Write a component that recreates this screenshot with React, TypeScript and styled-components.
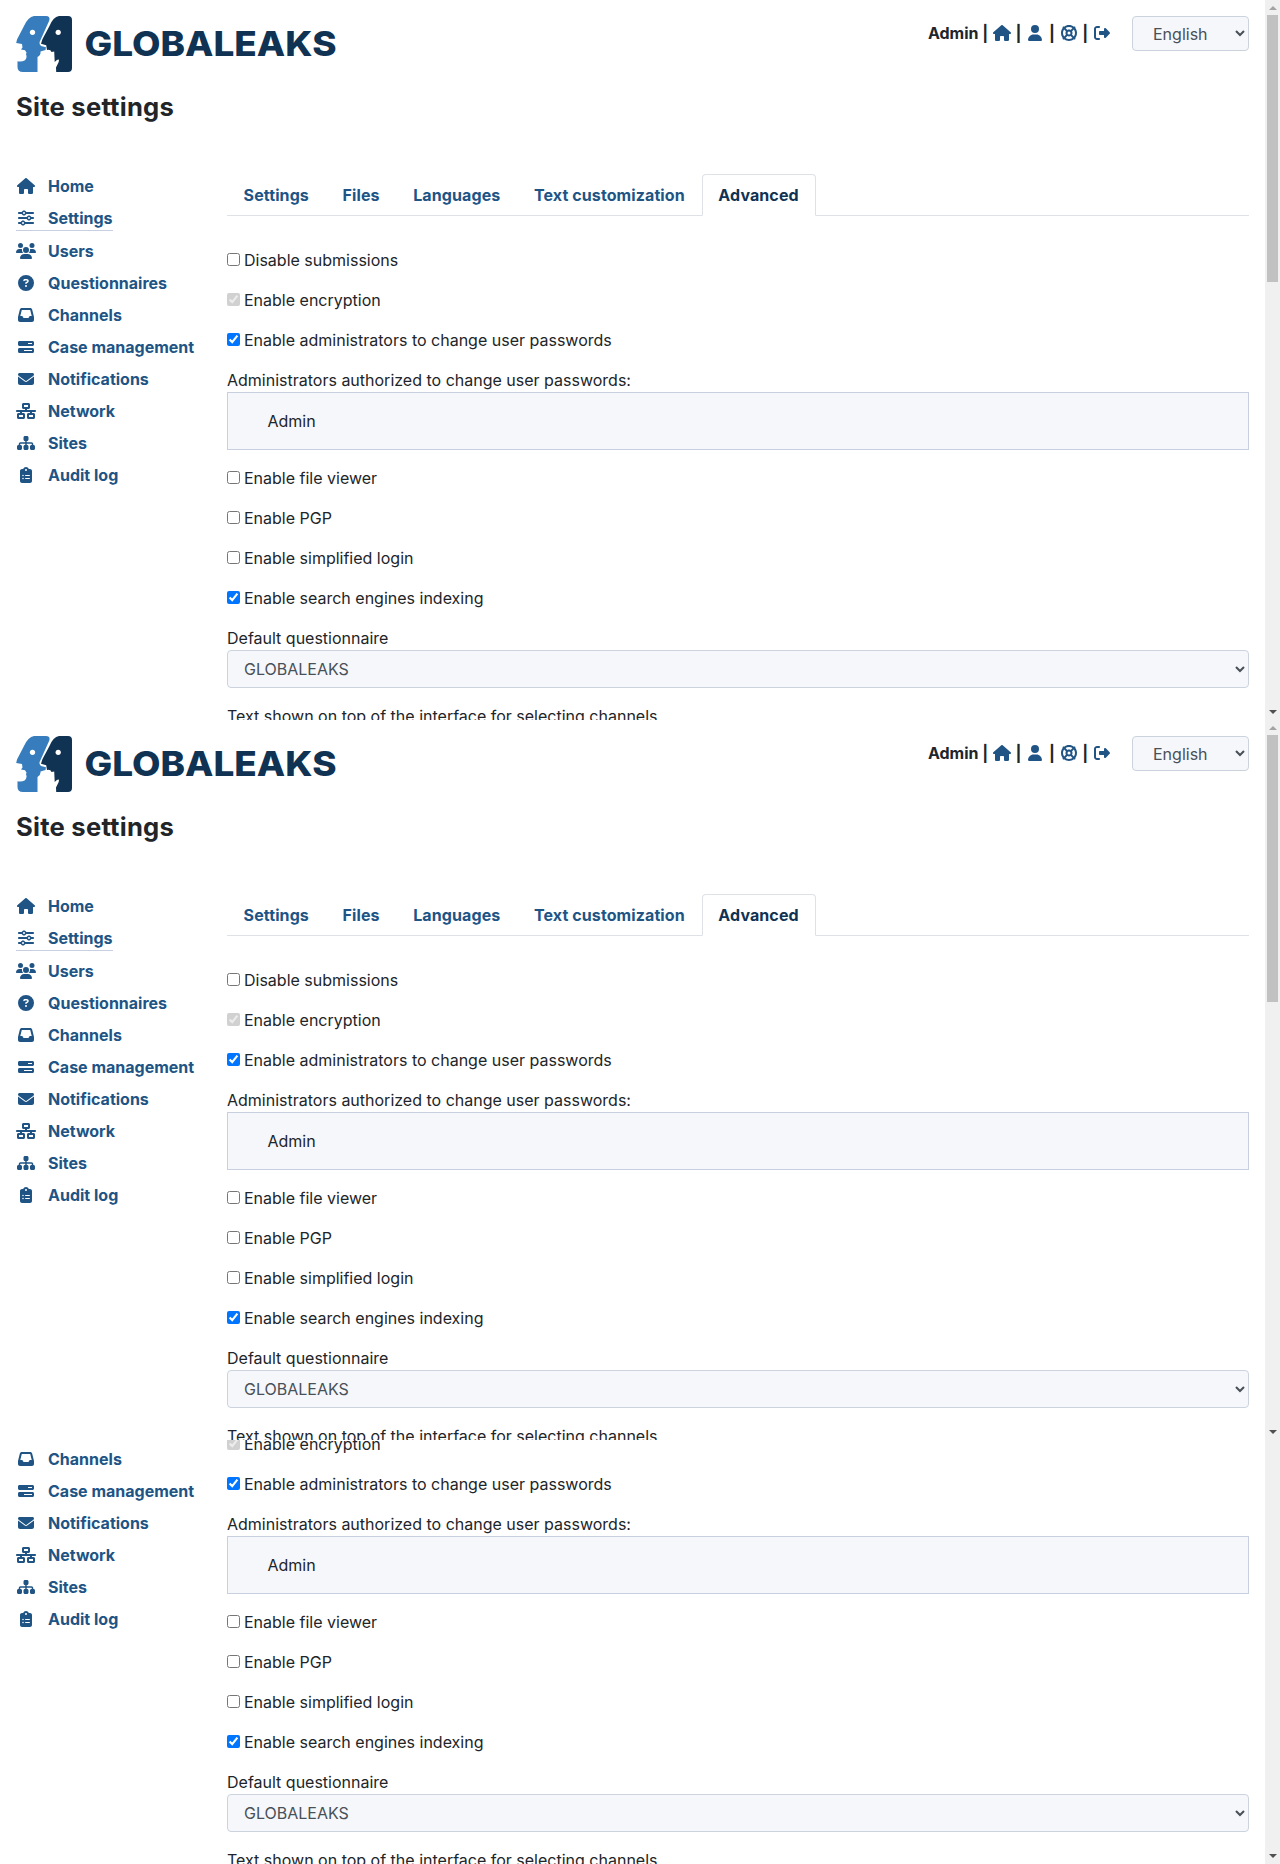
import React from "react";
import styled, { createGlobalStyle, css } from "styled-components";
import {
  FaHouse,
  FaUser,
  FaLifeRing,
  FaRightFromBracket,
  FaSliders,
  FaUsers,
  FaCircleQuestion,
  FaInbox,
  FaBarsProgress,
  FaEnvelope,
  FaNetworkWired,
  FaSitemap,
  FaClipboardList,
} from "react-icons/fa6";

const GlobalStyle = createGlobalStyle`
  *, *::before, *::after { box-sizing: border-box; }
  body {
    margin: 0;
    background: #fff;
    color: #212529;
    font-family: Inter, "Liberation Sans", sans-serif;
    font-size: 16px;
    line-height: 24px;
  }
`;

const Stack = styled.div`
  display: flex;
  flex-direction: column;
  width: 1280px;
`;

const Viewport = styled.section<{ $height: number }>`
  display: flex;
  flex-direction: column;
  justify-content: flex-end;
  height: ${(p) => p.$height}px;
  overflow: hidden;
`;

const Frame = styled.div`
  display: flex;
  flex: none;
  height: 720px;
  overflow: hidden;
`;

const Page = styled.div`
  flex: 1;
  min-width: 0;
  padding: 16px 16px 0;
`;

const Header = styled.header`
  display: flex;
  justify-content: space-between;
  align-items: flex-start;
  height: 56px;
`;

const UserBar = styled.div`
  display: flex;
  align-items: flex-start;
  gap: 16px;
`;

const UserMenu = styled.div`
  display: flex;
  align-items: center;
  height: 34px;
  font-weight: 700;
`;

const UserName = styled.span`
  margin-right: 4px;
`;

const Divider = styled.span`
  display: flex;
  justify-content: center;
  width: 5.4px;
`;

const iconSize = css`
  svg {
    flex: none;
    width: 20px;
    height: 16px;
  }
`;

const IconLink = styled.a`
  display: flex;
  justify-content: center;
  width: 28px;
  color: #205485;
  ${iconSize}
`;

const selectBase = css`
  font: inherit;
  color: #495057;
  background-color: #f5f7fb;
  border: 1px solid #ccd3dc;
  border-radius: 4px;
`;

const LanguageSelect = styled.select`
  ${selectBase}
  width: 117px;
  height: 35px;
  padding: 0 0 0 16px;
`;

const Title = styled.h1`
  margin: 20px 0 0;
  font-size: 25.6px;
  line-height: 30px;
  font-weight: 700;
  letter-spacing: 0.24px;
`;

const Body = styled.div`
  display: flex;
  margin-top: 52px;
`;

const Sidebar = styled.nav`
  display: flex;
  flex-direction: column;
  align-items: flex-start;
  width: 211px;
`;

const NavLink = styled.a<{ $active?: boolean }>`
  display: flex;
  align-items: center;
  gap: 12px;
  margin-bottom: 8px;
  color: #205485;
  font-weight: 700;
  border-bottom: ${(p) => (p.$active ? "1px solid #c8cfe0" : "none")};
`;

const NavIcon = styled.span`
  display: flex;
  justify-content: center;
  width: 20px;
  ${iconSize}
`;

const Main = styled.main`
  flex: 1;
  min-width: 0;
`;

const Tabs = styled.div`
  display: flex;
  height: 42px;
  border-bottom: 1px solid #dee2e6;
`;

const Tab = styled.a<{ $active?: boolean }>`
  height: 42px;
  padding: 8px 16px 8px 15.6px;
  border: 1px solid ${(p) => (p.$active ? "#dee2e6" : "transparent")};
  border-bottom-color: ${(p) => (p.$active ? "#fff" : "transparent")};
  border-radius: 4px 4px 0 0;
  color: ${(p) => (p.$active ? "#103253" : "#205485")};
  background: ${(p) => (p.$active ? "#fff" : "none")};
  font-weight: 700;
  letter-spacing: 0.1px;
`;

const Form = styled.div`
  display: flex;
  flex-direction: column;
  gap: 16px;
  padding-top: 32px;
`;

const CheckLabel = styled.label`
  display: flex;
  align-items: center;
  gap: 4px;
`;

const Checkbox = styled.input`
  width: 13px;
  height: 13px;
  margin: 0 0 1px;
`;

const Field = styled.div`
  display: flex;
  flex-direction: column;
`;

const AdminList = styled.div`
  height: 58px;
  padding: 16px 39.5px;
  background: #f5f7fb;
  border: 1px solid #c8d0df;
`;

const FormSelect = styled.select`
  ${selectBase}
  width: 100%;
  height: 38px;
  padding: 6px 12px;
`;

const ScrollTrack = styled.div`
  display: flex;
  flex-direction: column;
  align-items: center;
  width: 15px;
  background: #f0f0f0;
`;

const ScrollThumb = styled.div`
  width: 11px;
  height: 267px;
  margin-bottom: auto;
  background: #c1c1c1;
`;

const ScrollButton = styled.div`
  display: flex;
  justify-content: center;
  align-items: center;
  height: 15px;
`;

const Triangle = styled.div<{ $up?: boolean }>`
  margin-bottom: ${(p) => (p.$up ? "0" : "1px")};
  border: solid transparent;
  border-width: ${(p) => (p.$up ? "0 4px 4px" : "4px 4px 0")};
  ${(p) => (p.$up ? "border-bottom-color: #a3a3a3" : "border-top-color: #505050")};
`;

const Logo = () => (
  <svg width="322" height="56" viewBox="0 0 322 56" aria-label="GLOBALEAKS">
    <path
      fill="#377dbe"
      d="M18 0H30Q34.500 0 33.300 4.500L23.600 26Q23 28.500 25 30L30 31.300L29.500 34L24.500 35.500Q25 39 21.500 41V56H7Q1.500 56 1.500 51V45.300Q6 46 9 44.200Q11.500 41 10 38.500L10.500 36.500L9 34.300L5 33.500L6.500 31.500L6 28L0.200 27L1 23.500L8 10Q12 1 18 0Z"
    />
    <path
      fill="#103253"
      d="M43 0H52Q56 0 56 4V52Q56 56 52 56H40.200L40 51.500L42.700 46L43 43.800Q41.500 42.500 38.700 46L38.200 35.500L35.500 36Q34.500 33 31 34L30.200 29.200L25 27.700L26.500 23L33.500 10Q37 1 43 0Z"
    />
    <circle cx="16.500" cy="16.300" r="2.600" fill="#fff" />
    <circle cx="42.200" cy="16.300" r="2.600" fill="#fff" />
    <text
      x="68.500"
      y="40.200"
      fill="#103253"
      fontFamily="Inter"
      fontSize="34.500"
      fontWeight="800"
      textLength="252"
      lengthAdjust="spacingAndGlyphs"
    >
      GLOBALEAKS
    </text>
  </svg>
);

const userIcons = [FaHouse, FaUser, FaLifeRing, FaRightFromBracket];

const navItems = [
  { label: "Home", Icon: FaHouse },
  { label: "Settings", Icon: FaSliders },
  { label: "Users", Icon: FaUsers },
  { label: "Questionnaires", Icon: FaCircleQuestion },
  { label: "Channels", Icon: FaInbox },
  { label: "Case management", Icon: FaBarsProgress },
  { label: "Notifications", Icon: FaEnvelope },
  { label: "Network", Icon: FaNetworkWired },
  { label: "Sites", Icon: FaSitemap },
  { label: "Audit log", Icon: FaClipboardList },
];

const tabs = ["Settings", "Files", "Languages", "Text customization", "Advanced"];

type OptionProps = { label: string; checked?: boolean; disabled?: boolean };

const Option = ({ label, checked, disabled }: OptionProps) => (
  <CheckLabel>
    <Checkbox type="checkbox" defaultChecked={checked} disabled={disabled} />
    {label}
  </CheckLabel>
);

const SettingsPage = () => (
  <Frame>
    <Page>
      <Header>
        <Logo />
        <UserBar>
          <UserMenu>
            <UserName>Admin</UserName>
            {userIcons.map((Icon, i) => (
              <React.Fragment key={i}>
                <Divider>|</Divider>
                <IconLink>
                  <Icon />
                </IconLink>
              </React.Fragment>
            ))}
          </UserMenu>
          <LanguageSelect defaultValue="en">
            <option value="en">English</option>
          </LanguageSelect>
        </UserBar>
      </Header>
      <Title>Site settings</Title>
      <Body>
        <Sidebar>
          {navItems.map(({ label, Icon }) => (
            <NavLink key={label} $active={label === "Settings"}>
              <NavIcon>
                <Icon />
              </NavIcon>
              {label}
            </NavLink>
          ))}
        </Sidebar>
        <Main>
          <Tabs>
            {tabs.map((tab) => (
              <Tab key={tab} $active={tab === "Advanced"}>
                {tab}
              </Tab>
            ))}
          </Tabs>
          <Form>
            <Option label="Disable submissions" />
            <Option label="Enable encryption" checked disabled />
            <Option label="Enable administrators to change user passwords" checked />
            <Field>
              Administrators authorized to change user passwords:
              <AdminList>Admin</AdminList>
            </Field>
            <Option label="Enable file viewer" />
            <Option label="Enable PGP" />
            <Option label="Enable simplified login" />
            <Option label="Enable search engines indexing" checked />
            <Field>
              Default questionnaire
              <FormSelect defaultValue="default">
                <option value="default">GLOBALEAKS</option>
              </FormSelect>
            </Field>
            <Field>Text shown on top of the interface for selecting channels</Field>
          </Form>
        </Main>
      </Body>
    </Page>
    <ScrollTrack>
      <ScrollButton>
        <Triangle $up />
      </ScrollButton>
      <ScrollThumb />
      <ScrollButton>
        <Triangle />
      </ScrollButton>
    </ScrollTrack>
  </Frame>
);

export default function App() {
  return (
    <>
      <GlobalStyle />
      <Stack>
        {[720, 720, 424].map((height, i) => (
          <Viewport key={i} $height={height}>
            <SettingsPage />
          </Viewport>
        ))}
      </Stack>
    </>
  );
}
